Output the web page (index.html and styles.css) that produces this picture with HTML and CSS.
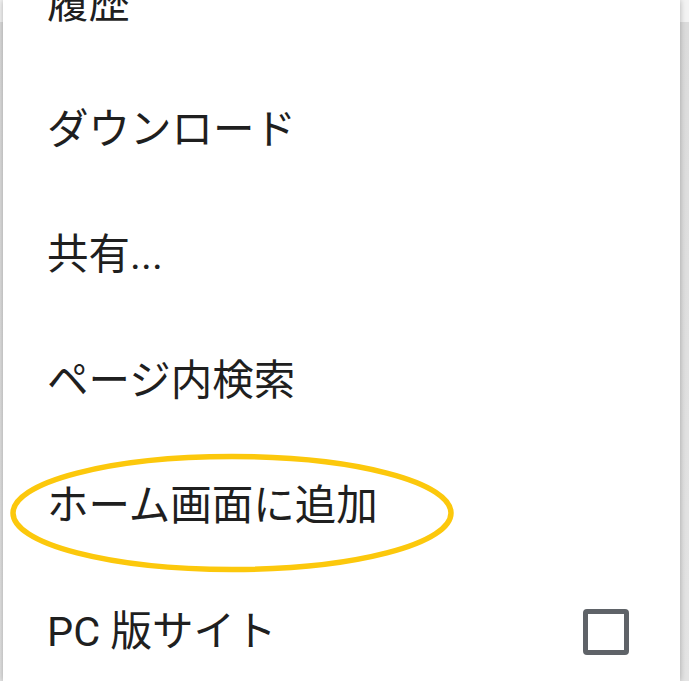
FILE: index.html
```html
<!DOCTYPE html>
<html lang="ja">
<head>
<meta charset="utf-8">
<link rel="stylesheet" href="styles.css">
</head>
<body>
<div class="page">
  <div class="menu">
    <ul class="list">
      <li class="item">履歴</li>
      <li class="item">ダウンロード</li>
      <li class="item">共有...</li>
      <li class="item">ページ内検索</li>
      <li class="item highlight">ホーム画面に追加
        <svg class="ring" width="450" height="140" viewBox="0 0 450 140">
          <ellipse cx="223" cy="70" rx="219" ry="56.5" fill="none" stroke="#fcc80c" stroke-width="5.5"/>
        </svg>
      </li>
      <li class="item">PC 版サイト<span class="check"></span></li>
    </ul>
  </div>
</div>
</body>
</html>
```
FILE: styles.css
```css
html, body {
  margin: 0;
  padding: 0;
  height: 100%;
  overflow: hidden;
}
body {
  background: linear-gradient(to bottom, #f3f3f3 0, #f3f3f3 22px, #dcdcdc 22px, #e4e4e4 100%);
}
.page {
  padding-left: 3px;
  width: 677px;
  height: 100%;
}
.menu {
  background: #ffffff;
  height: 100%;
  box-shadow: 0 0 6px rgba(0, 0, 0, 0.28);
  overflow: hidden;
}
.list {
  list-style: none;
  margin: -59px 0 0 0;
  padding: 0;
}
.item {
  position: relative;
  height: 125.6px;
  display: flex;
  align-items: center;
  padding-left: 44px;
  padding-right: 51px;
  font-family: Roboto, "Noto Sans CJK JP", sans-serif;
  font-size: 41.5px;
  line-height: 1;
  color: #1f1f1f;
}
.check {
  margin-left: auto;
  width: 36px;
  height: 36px;
  border: 5px solid #5f6368;
  border-radius: 4px;
}
.ring {
  position: absolute;
  left: 6px;
  top: 0;
  pointer-events: none;
}
```
